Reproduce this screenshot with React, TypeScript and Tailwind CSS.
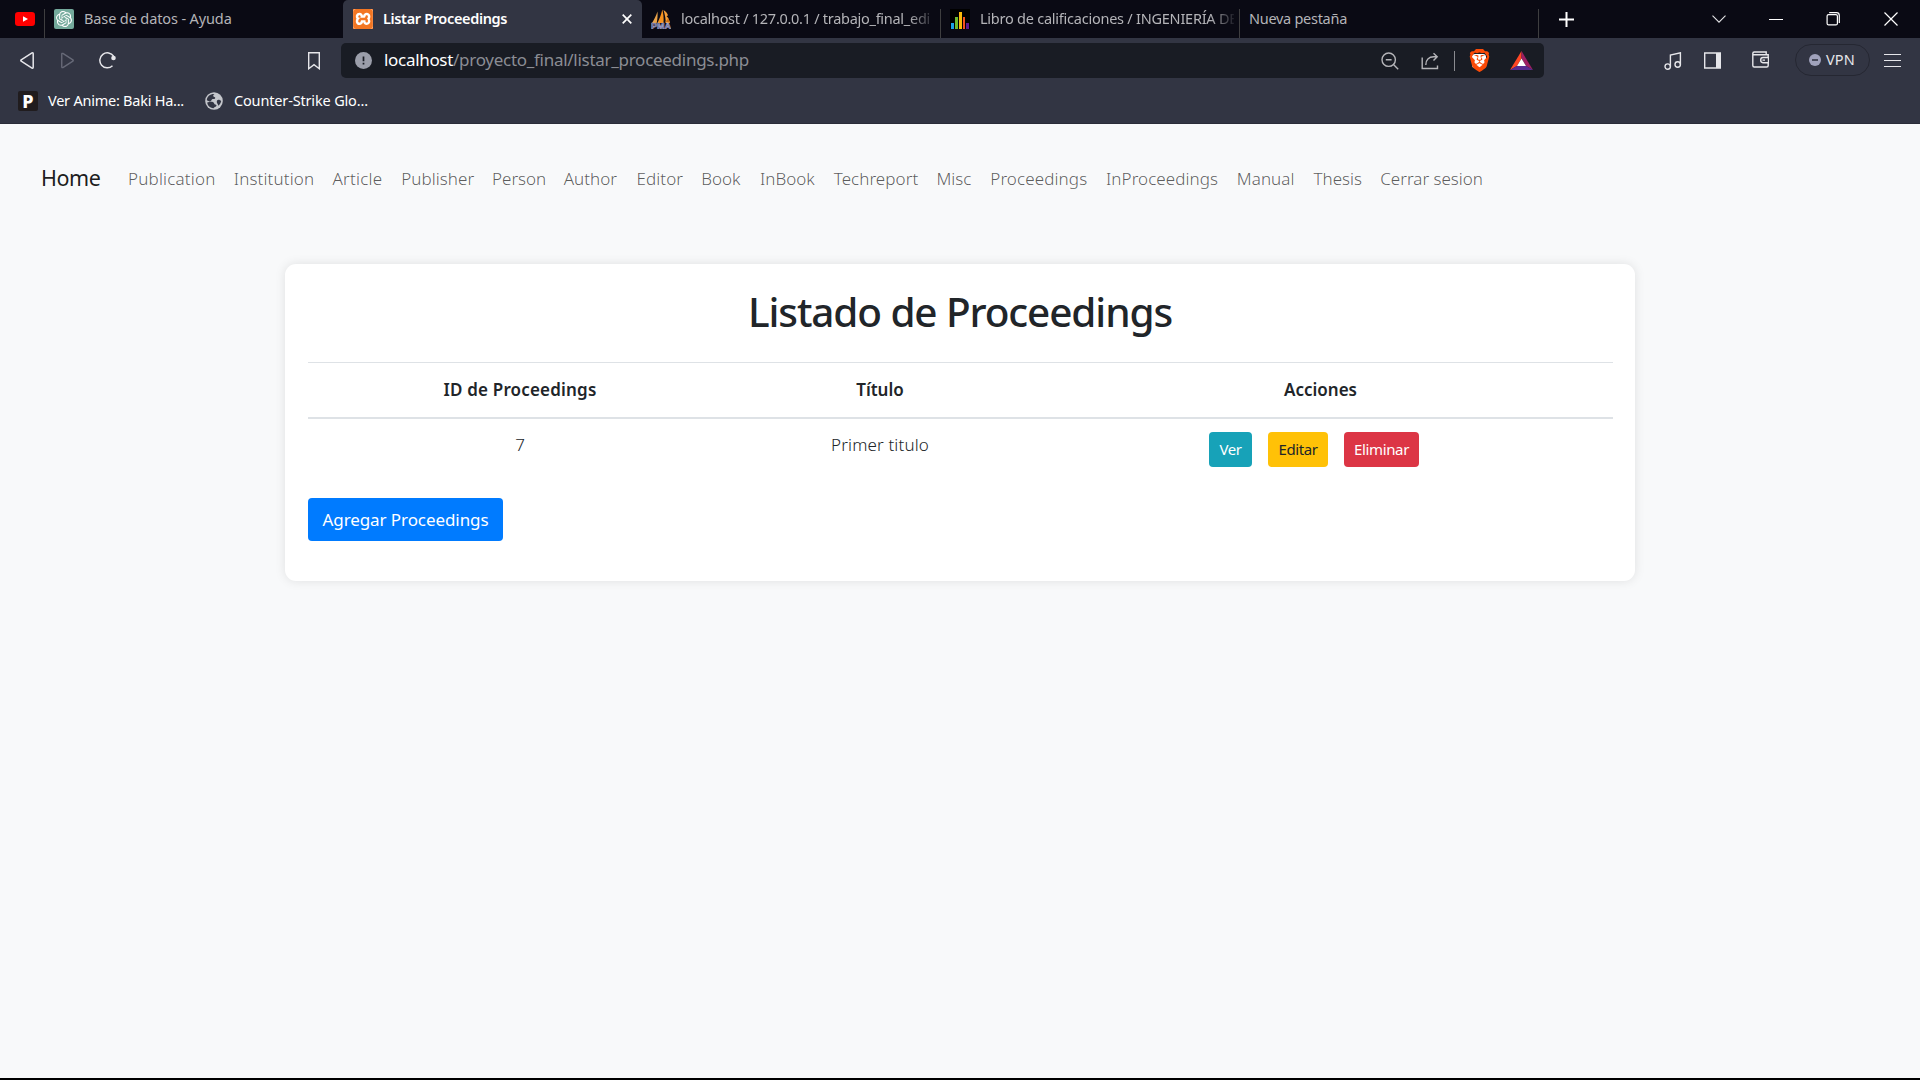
import type { ReactNode } from "react";
import { SiBrave, SiOpenai, SiXampp } from "react-icons/si";

const navLinks = [
  { label: "Publication", style: "w-[88px] tracking-[0.2px]" },
  { label: "Institution", style: "w-[81px] tracking-[0.14px]" },
  { label: "Article", style: "w-[51px] tracking-[0.25px]" },
  { label: "Publisher", style: "w-[73px] tracking-[0.06px]" },
  { label: "Person", style: "w-[54px]" },
  { label: "Author", style: "w-[55px]" },
  { label: "Editor", style: "w-[47px] tracking-[0.1px]" },
  { label: "Book", style: "w-[41px]" },
  { label: "InBook", style: "w-[56px]" },
  { label: "Techreport", style: "w-[85px] tracking-[0.06px]" },
  { label: "Misc", style: "w-[36px]" },
  { label: "Proceedings", style: "w-[98px] tracking-[0.12px]" },
  { label: "InProceedings", style: "w-[113px] tracking-[0.07px]" },
  { label: "Manual", style: "w-[59px] tracking-[0.1px]" },
  { label: "Thesis", style: "w-[49px]" },
  { label: "Cerrar sesion", style: "w-[104px]" },
];

function YoutubeIcon() {
  return (
    <svg className="h-[14px] w-5" viewBox="0 0 20 14">
      <rect width="20" height="14" rx="3.2" fill="#ff0000" />
      <path d="M8 4.2v5.6L13 7z" fill="#fff" />
    </svg>
  );
}

function SailIcon() {
  return (
    <svg className="size-5 shrink-0" viewBox="0 0 20 20">
      <path d="M6.500 2.500C5 7 3 11 1 14h4.700C6.500 10 6.800 6 6.500 2.500z" fill="#e9a34a" />
      <path d="M11.300.5C10.300 5 8.500 10 6.500 14h6C13 9 12.300 4 11.300.5z" fill="#f7931e" />
      <path d="M12.500 1c2.500 1.500 4 3.500 4.500 5.500l-1.500.5c1.500 1 3 4.500 3.500 7h-4.500c.5-3-.5-8-2-13z" fill="#f9a13a" />
      <path d="M14 12.500c1.500-.5 3-2 3-4l2 5z" fill="#c96d10" />
      <text x="0" y="19.800" textLength="20" lengthAdjust="spacingAndGlyphs" fontFamily="Liberation Sans" fontSize="8.500" fontWeight="700" fill="#3b3c6b" stroke="#a9a9cf" strokeWidth=".6">
        PMA
      </text>
    </svg>
  );
}

function BarsIcon() {
  return (
    <svg className="size-5 shrink-0" viewBox="0 0 20 20" shapeRendering="crispEdges">
      <path d="M0 0h20v20H0z" fill="#000" />
      <path d="M1 14h3v6H1z" fill="#1ba1e6" />
      <path d="M5 8h3v12H5z" fill="#6cbb2e" />
      <path d="M9 3h3v17H9z" fill="#f9b80a" />
      <path d="M13 8h2v12h-2z" fill="#f4511e" />
      <path d="M16 14h3v6h-3z" fill="#5b1a8c" />
    </svg>
  );
}

function XamppIcon() {
  return (
    <span className="flex size-5 shrink-0 items-center justify-center bg-[#f37623]">
      <SiXampp className="size-5 rounded-[3px] bg-white text-[#f37623]" />
    </span>
  );
}

function TabTitle({ children, className = "" }: { children: ReactNode; className?: string }) {
  return <span className={`mb-[2px] overflow-hidden whitespace-pre text-[14.5px] leading-5 text-[#b4b4b8] ${className}`}>{children}</span>;
}

function TabDivider() {
  return <div className="h-[29px] w-px shrink-0 self-end bg-[#3e3e40]" />;
}

function TabStrip() {
  return (
    <div className="flex h-[38px] items-center bg-[#0a0a14]">
      <div className="flex w-11 shrink-0 items-center pl-[15px]">
        <YoutubeIcon />
      </div>
      <TabDivider />
      <div className="flex w-[298px] shrink-0 items-center gap-[10px] pl-[9px]">
        <span className="flex size-5 shrink-0 items-center justify-center rounded-[2px] bg-[#74aa9c]">
          <SiOpenai className="size-4 text-white" />
        </span>
        <TabTitle className="tracking-[-0.12px]">Base de datos - Ayuda</TabTitle>
      </div>
      <div className="flex h-full w-[299px] shrink-0 items-center rounded-t-[5px] bg-[#323543] pl-[10px]">
        <XamppIcon />
        <TabTitle className="ml-[10px] w-[240px] font-semibold tracking-[-0.35px] text-white">Listar Proceedings</TabTitle>
        <svg className="-ml-px size-[10px]" viewBox="0 0 10 10" stroke="#fff" strokeWidth="1.700">
          <path d="M.7.700l8.600 8.600M9.300.700L.700 9.300" />
        </svg>
      </div>
      <div className="flex w-[298px] shrink-0 items-center pl-[9px]">
        <SailIcon />
        <TabTitle className="ml-[10px] w-[255px] tracking-[-0.28px] [mask-image:linear-gradient(to_right,#000_228px,transparent_256px)]">
          localhost / 127.0.0.1 / trabajo_final_edi
        </TabTitle>
      </div>
      <TabDivider />
      <div className="flex w-[298px] shrink-0 items-center pl-[9px]">
        <BarsIcon />
        <TabTitle className="ml-[10px] w-[254px] tracking-[-0.24px] [mask-image:linear-gradient(to_right,#000_230px,transparent_257px)]">
          Libro de calificaciones / INGENIERÍA DE
        </TabTitle>
      </div>
      <TabDivider />
      <div className="flex w-[298px] shrink-0 items-center pl-[9px]">
        <TabTitle className="tracking-[-0.28px]">Nueva pestaña</TabTitle>
      </div>
      <TabDivider />
      <svg className="ml-5 size-[15px] shrink-0" viewBox="0 0 15 15" stroke="#fff" strokeWidth="2">
        <path d="M7.500 0v15M0 7.500h15" />
      </svg>
      <div className="ml-auto flex items-center pr-[22px]">
        <svg className="h-2 w-[14px]" viewBox="0 0 14 8" fill="none" stroke="#e4e4e6" strokeWidth="1.100">
          <path d="M.5.700L7 7.200 13.500.700" />
        </svg>
        <div className="ml-[43px] h-px w-[14px] bg-white" />
        <svg className="ml-[43px] size-[14px]" viewBox="0 0 14 14" fill="none" stroke="#fff" strokeWidth="1.200">
          <rect x="1.100" y="2.600" width="10.300" height="10.300" rx="1.500" />
          <path d="M3.200.700h7.300a2.800 2.800 0 0 1 2.800 2.800v7.500" />
        </svg>
        <svg className="ml-11 size-[14px]" viewBox="0 0 14 14" stroke="#fff" strokeWidth="1.200">
          <path d="M.5.500l13 13M13.500.500L.500 13.500" />
        </svg>
      </div>
    </div>
  );
}

function AddressBar() {
  return (
    <div className="ml-[21px] flex h-[35px] w-[1203px] items-center rounded-[5px] bg-[#191c24] pl-[14px]">
      <svg className="size-[17px] shrink-0" viewBox="0 0 17 17">
        <circle cx="8.500" cy="8.500" r="8.500" fill="#9b9eaa" />
        <path d="M8.500 4.500v4.800M8.500 10.700v1.800" stroke="#191c24" strokeWidth="1.700" />
      </svg>
      <div className="mb-px ml-3 flex whitespace-nowrap text-[17px] leading-6 text-[#8b8d94]">
        <span className="tracking-[-0.31px] text-white">localhost</span>
        <span className="tracking-[-0.28px]">/proyecto_final/listar_proceedings.php</span>
      </div>
      <div className="ml-auto flex items-center pr-[11px] text-[#b5b5b9]">
        <svg className="size-[18px]" viewBox="0 0 18 18" fill="none" stroke="currentColor" strokeWidth="1.400">
          <circle cx="7.700" cy="7.700" r="6.700" />
          <path d="M12.500 12.500l4.700 4.700M4.800 7.700h5.800" />
        </svg>
        <svg className="ml-[22px] size-[18px]" viewBox="0 0 18 18" fill="none" stroke="currentColor" strokeWidth="1.400">
          <path d="M1.200 5.500v11h15.300v-3M4.800 13c0-5 3-8.200 8-8.200h3.400M12.500 1.200l3.700 3.600-3.700 3.800" />
        </svg>
        <div className="ml-[15px] h-5 w-px bg-[#8a8b90]" />
        <span className="ml-[14px] flex h-[23px] w-5 items-center justify-center">
          <span className="flex size-[14px] shrink-0 items-center justify-center rounded-[3px] bg-white">
            <SiBrave className="size-[23px] shrink-0 text-[#fb4a07]" />
          </span>
        </span>
        <svg className="ml-[21px] h-[19px] w-[23px]" viewBox="0 0 23 19">
          <path d="M11.500 0L0 19l7.200-4.200 4.300-7.500z" fill="#ff4724" />
          <path d="M11.500 0L23 19l-7.200-4.200-4.300-7.500z" fill="#9e1f63" />
          <path d="M0 19h23l-7.200-4.200H7.200z" fill="#572c91" />
          <path d="M11.500 7.500l4.500 7.500H7z" fill="#fff" />
        </svg>
      </div>
    </div>
  );
}

function Toolbar() {
  return (
    <div className="flex h-[45px] items-center pl-5 text-[#e6e6ea]">
      <svg className="h-[17px] w-[14px]" viewBox="0 0 14 17" fill="none" stroke="currentColor" strokeWidth="1.500" strokeLinejoin="round">
        <path d="M12 .9L1.200 7.800q-.8.700 0 1.400L12 16.100q1.200.4 1.200-.8V1.700Q13.200.500 12 .900z" />
      </svg>
      <svg className="ml-[27px] h-[17px] w-[13px] text-[#666977]" viewBox="0 0 14 17" fill="none" stroke="currentColor" strokeWidth="1.500" strokeLinejoin="round">
        <path d="M2 .9l10.800 6.900q.8.700 0 1.400L2 16.100q-1.200.4-1.200-.8V1.700Q.800.500 2 .900z" />
      </svg>
      <svg className="ml-[25px] size-[17px]" viewBox="0 0 17 17" fill="none" stroke="currentColor" strokeWidth="1.500">
        <path d="M13.500 13.800A7.500 7.500 0 1 1 14.600 4.200" />
        <circle cx="14.500" cy="6" r="2.300" fill="currentColor" stroke="none" />
      </svg>
      <svg className="ml-[192px] h-[18px] w-3" viewBox="0 0 12 18" fill="none" stroke="currentColor" strokeWidth="1.400">
        <path d="M.7.700h10.600v16L6 12.700.700 16.700z" />
      </svg>
      <AddressBar />
      <svg className="ml-[120px] size-[18px]" viewBox="0 0 18 18" fill="none" stroke="currentColor" strokeWidth="1.400">
        <circle cx="3.700" cy="14.600" r="2.700" />
        <circle cx="13.700" cy="12.500" r="2.700" />
        <path d="M6.400 14.600V3l10-2.200v11.700" />
      </svg>
      <svg className="ml-[22px] size-[17px]" viewBox="0 0 17 17">
        <path d="M.7 1h15.600v15H.700z" fill="none" stroke="currentColor" strokeWidth="1.400" />
        <path d="M12 1h5v15h-5z" fill="currentColor" />
      </svg>
      <svg className="mb-[2px] ml-[31px] size-[17px]" viewBox="0 0 17 17" fill="none" stroke="currentColor" strokeWidth="1.400">
        <path d="M16.200 6V3.800H2.200Q.800 3.800.800 2.400T2.200 1h12v2.800M.800 2.400v12.100Q.800 16 2.200 16h12.500q1.500 0 1.500-1.500V12M16.500 6.500H11Q8.700 6.500 8.700 9T11 11.700h5.500zM10.500 9.100h2.500" />
      </svg>
      <div className="mb-px ml-[26px] flex h-8 w-[75px] items-center rounded-full border border-[#252732] pl-[13px]">
        <svg className="size-3" viewBox="0 0 12 12">
          <circle cx="6" cy="6" r="6" fill="#a0a2bb" />
          <path d="M3 6h6" stroke="#323543" strokeWidth="1.600" />
        </svg>
        <span className="mb-[2px] ml-[5px] text-[14.5px] leading-5 tracking-[0.15px]">VPN</span>
      </div>
      <div className="ml-[14px] flex w-[17px] flex-col gap-[5px]">
        <div className="h-px bg-current" />
        <div className="h-px bg-current" />
        <div className="h-px bg-current" />
      </div>
    </div>
  );
}

function Bookmarks() {
  return (
    <div className="flex h-[41px] items-center whitespace-nowrap border-b border-[#2a2c38] pb-[5px] pl-[18px] text-[14.5px] leading-5 text-white">
      <span className="flex size-5 items-center justify-center rounded-[2px] bg-[#201c1e] text-[18px] font-extrabold leading-5">P</span>
      <span className="mb-[2px] ml-[10px] w-[138px] tracking-[-0.24px]">Ver Anime: Baki Ha...</span>
      <svg className="ml-[19px] size-[18px]" viewBox="0 0 18 18">
        <circle cx="9" cy="9" r="8.800" fill="#c4c6cb" />
        <path d="M9.500 2c-2 1-1.500 3 .5 3.200 1 1.500-1 2-2.500 1.800-1.500 1-1 2.500-3 2.500L1.800 8.300C2 4.500 5 1.800 9.500 2zM5 9.800c2-.3 4 .2 4.200 1.600s2.500.6 2.300 2.400c-.5 1.500-2.500 1.200-3 2.400-4-.2-6-3-6.300-5.700zM12 8.500c1.500-1.500 3-.5 4.200.6-.4 2-1.500 3.500-2.700 4.700-.5-2-2.500-3.300-1.500-5.300z" fill="#323543" />
      </svg>
      <span className="mb-[2px] ml-[11px] tracking-[-0.16px]">Counter-Strike Glo...</span>
    </div>
  );
}

function ProceedingsCard() {
  return (
    <main className="mx-auto mt-[45px] h-[317px] w-[1350px] rounded-[11px] bg-white px-[23px] pt-[22px] text-[#212529] shadow-[0_0_11px_rgba(0,0,0,0.1)]">
      <h1 className="h-[76px] whitespace-nowrap pt-px text-center text-[40.5px] font-medium leading-[50px] tracking-[-1.12px]">Listado de Proceedings</h1>
      <table className="w-[1305px] table-fixed text-center text-[17px] leading-[26px]">
        <colgroup>
          <col className="w-[424px]" />
          <col className="w-[296px]" />
          <col className="w-[585px]" />
        </colgroup>
        <thead>
          <tr className="h-[55px] border-t border-b-2 border-t-[#dee2e6] border-b-[#dee2e6]">
            <th className="font-semibold tracking-[0.18px]">ID de Proceedings</th>
            <th className="font-semibold">Título</th>
            <th className="font-semibold">Acciones</th>
          </tr>
        </thead>
        <tbody className="font-light">
          <tr className="align-top">
            <td className="pt-[13px]">7</td>
            <td className="pt-[13px] tracking-[0.15px]">Primer titulo</td>
            <td className="pt-[13px]">
              <div className="flex h-[35px] pl-[181px] text-[15px] font-normal leading-[35px] text-white">
                <span className="w-[43px] rounded-[4px] bg-[#17a2b8] tracking-[-0.4px]">Ver</span>
                <span className="ml-4 w-[60px] rounded-[4px] bg-[#ffc107] tracking-[-0.4px] text-[#212529]">Editar</span>
                <span className="ml-4 w-[75px] rounded-[4px] bg-[#dc3545] tracking-[-0.36px]">Eliminar</span>
              </div>
            </td>
          </tr>
        </tbody>
      </table>
      <div className="mt-[31px] h-[43px] w-[195px] whitespace-nowrap rounded-[4px] bg-[#007bff] text-center text-[17px] leading-[43px] tracking-[-0.08px] text-white">
        Agregar Proceedings
      </div>
    </main>
  );
}

export default function App() {
  return (
    <div className="flex h-[1080px] w-[1920px] flex-col overflow-hidden border-b-2 border-black bg-[#f8f9fa] font-['Noto_Sans',sans-serif]">
      <header className="bg-[#323543]">
        <TabStrip />
        <Toolbar />
        <Bookmarks />
      </header>
      <nav className="flex h-[95px] items-center pl-[41px] pt-[13px]">
        <a className="w-[87px] text-[21.5px] leading-8 tracking-[-0.45px] text-black/90">Home</a>
        <div className="flex gap-[17.75px] whitespace-nowrap pt-[2px] text-[17px] font-light leading-7 text-black/65">
          {navLinks.map((link) => (
            <a key={link.label} className={link.style}>
              {link.label}
            </a>
          ))}
        </div>
      </nav>
      <ProceedingsCard />
    </div>
  );
}
